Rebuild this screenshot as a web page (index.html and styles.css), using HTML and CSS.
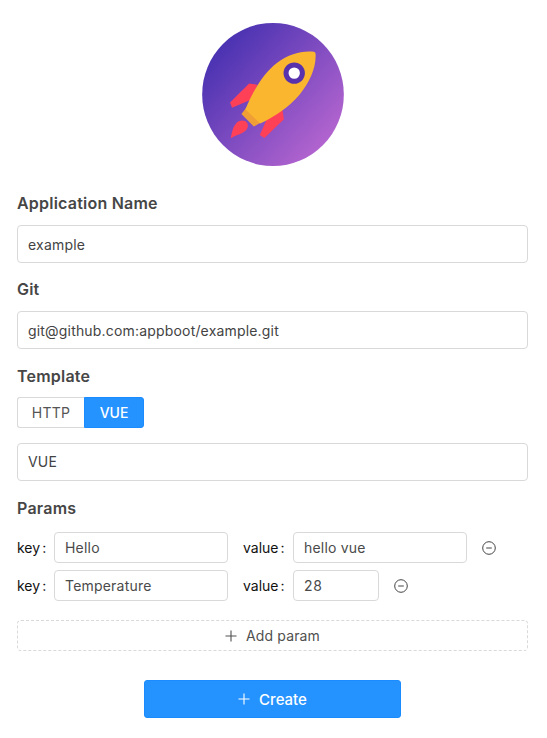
FILE: index.html
```html
<!DOCTYPE html>
<html lang="en">
<head>
<meta charset="utf-8">
<title>Create application</title>
<link rel="stylesheet" href="styles.css">
</head>
<body>
<main class="page">
  <svg class="logo" viewBox="29 26 425 428" aria-hidden="true">
    <defs>
      <linearGradient id="sky" x1="0.12" y1="0.16" x2="0.87" y2="0.84">
        <stop offset="0" stop-color="#4932b1"/>
        <stop offset="1" stop-color="#b264cf"/>
      </linearGradient>
    </defs>
    <ellipse cx="241.500" cy="240" rx="212" ry="214" fill="url(#sky)"/>
    <path d="M195 211L170 207L113 264L119 280L175 256Z" fill="#ff4057"/>
    <path d="M270 287L274 314L216 370L202 361L226 307Z" fill="#ff4057"/>
    <path d="M115 371C119 350 122 337 130 328C139 316 157 315 164 325C170 335 164 346 154 352C145 359 130 361 115 371Z" fill="#ff4057"/>
    <path d="M147 298L164 277L208 322L184 336Z" fill="#f09f36"/>
    <path d="M159 284C181 231 211 178 254 145C286 120 326 108 364 112Q369 113 369 119C371 160 351 203 322 239C291 277 250 304 203 327Z" fill="#fbb62f"/>
    <circle cx="305" cy="176" r="24.500" fill="#fff" stroke="#5732ac" stroke-width="15"/>
  </svg>

  <h2 class="heading heading-app">Application Name</h2>
  <input class="field field-large" value="example">
  <h2 class="heading">Git</h2>
  <input class="field field-large git" value="git@github.com:appboot/example.git">
  <h2 class="heading heading-template">Template</h2>
  <div class="tabs">
    <button class="tab">HTTP</button><button class="tab tab-active">VUE</button>
  </div>
  <input class="field field-large vue" value="VUE">
  <h2 class="heading heading-params">Params</h2>
  <div class="params">
    <div class="param">
      <span class="label label-key">key<i class="colon">:</i></span>
      <input class="field" value="Hello">
      <span class="label label-value">value<i class="colon">:</i></span>
      <input class="field" value="hello vue">
      <svg class="remove" viewBox="0 0 14 14"><circle cx="7" cy="7" r="6.300"/><path d="M4.200 7h5.600"/></svg>
    </div>
    <div class="param">
      <span class="label label-key">key<i class="colon">:</i></span>
      <input class="field" value="Temperature">
      <span class="label label-value">value<i class="colon">:</i></span>
      <input class="field field-number" value="28">
      <svg class="remove" viewBox="0 0 14 14"><circle cx="7" cy="7" r="6.300"/><path d="M4.200 7h5.600"/></svg>
    </div>
  </div>
  <button class="add"><svg class="plus" viewBox="0 0 12 12"><path d="M6 .5v11M.5 6h11"/></svg><span>Add param</span></button>
  <button class="create"><svg class="plus" viewBox="0 0 12 12"><path d="M6 .5v11M.5 6h11"/></svg><span>Create</span></button>
</main>
</body>
</html>
```
FILE: styles.css
```css
* { box-sizing: border-box; }
body { margin: 0; background: #fff; }
body, input, button { font-family: Inter, "Liberation Sans", sans-serif; }
.page {
  display: flex;
  flex-direction: column;
  width: 511px;
  margin: 0 0 0 17px;
  padding-top: 22.5px;
}
.logo { width: 142px; height: 143px; align-self: center; }
.heading {
  margin: 14px 0 10px;
  font-size: 16px;
  line-height: 24px;
  font-weight: 600;
  letter-spacing: 0.22px;
  color: #464646;
}
.heading-app { margin-top: 25.5px; }
.heading-template { margin-top: 15px; margin-bottom: 9px; }
.heading-params { margin-top: 15px; margin-bottom: 12px; }
.field {
  display: block;
  width: 174px;
  height: 31px;
  margin: 0;
  padding: 0 10px;
  border: 1px solid #d9d9d9;
  border-radius: 4px;
  background: #fff;
  font-size: 14px;
  letter-spacing: 0.2px;
  color: #4a4a4a;
  outline: none;
}
.field-large { width: 100%; height: 38px; color: #434343; }
.git { letter-spacing: 0.18px; }
.vue { padding-bottom: 2px; }
.tabs { display: flex; margin-bottom: 15px; }
.tab {
  width: 67px;
  height: 31px;
  padding: 0;
  border: 1px solid #d9d9d9;
  border-right: 0;
  border-radius: 3px 0 0 3px;
  background: #fff;
  font-size: 14px;
  letter-spacing: 0.3px;
  color: #555;
}
.tab-active {
  width: 60px;
  border: 1px solid #1b8cff;
  border-radius: 0 3px 3px 0;
  background: #2593ff;
  font-weight: 500;
  letter-spacing: 0;
  color: #fff;
}
.params { display: grid; row-gap: 7px; }
.param { display: flex; align-items: center; }
.label { display: flex; font-size: 14px; color: #111; }
.label-key { width: 37px; }
.label-value { width: 50px; margin-left: 15px; }
.colon { font-style: normal; margin-left: 2px; }
.field-number { width: 86px; letter-spacing: 0.6px; }
.remove {
  width: 14px;
  height: 14px;
  margin-left: 15px;
  fill: none;
  stroke: #444;
  stroke-width: 1;
}
.plus { width: 12px; height: 12px; fill: none; stroke: currentColor; stroke-width: 1.100; }
.add, .create { display: flex; align-items: center; justify-content: center; padding: 0; }
.add {
  height: 31px;
  margin-top: 19px;
  gap: 9px;
  border: 1px dashed #d9d9d9;
  border-radius: 4px;
  background: #fff;
  font-size: 14px;
  letter-spacing: 0.15px;
  color: #505050;
}
.create {
  align-self: center;
  width: 257px;
  height: 38px;
  margin-top: 29px;
  gap: 9px;
  border: 1px solid #1b8cff;
  border-radius: 3px;
  background: #2593ff;
  font-size: 15px;
  font-weight: 500;
  color: #fff;
}
```
